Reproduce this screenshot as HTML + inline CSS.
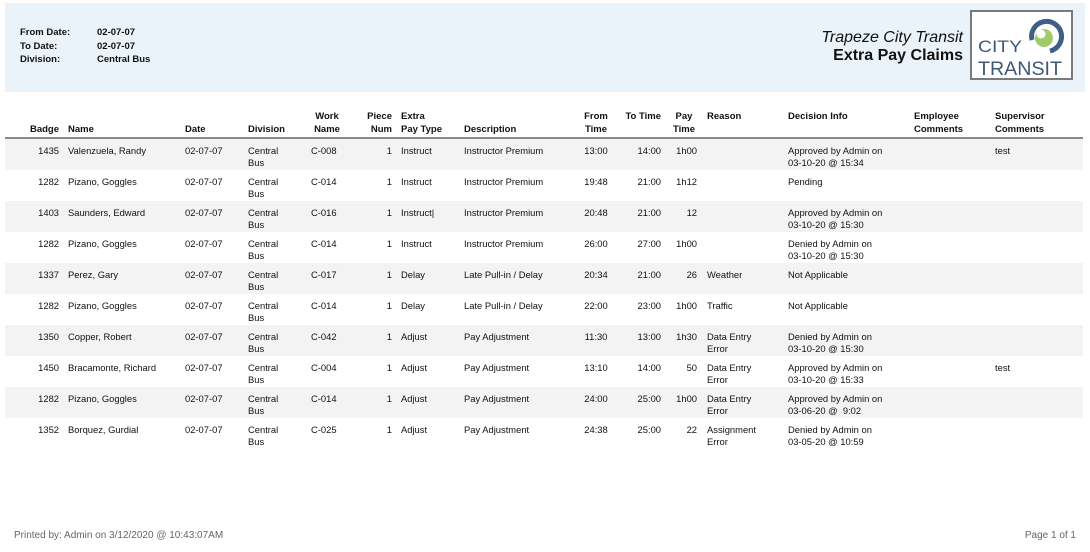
<!DOCTYPE html>
<html><head><meta charset="utf-8"><style>
*{margin:0;padding:0;box-sizing:border-box}
body{width:1090px;height:552px;background:#fff;font-family:"Liberation Sans",Arial,sans-serif;color:#111;position:relative;overflow:hidden}
.hdr{position:absolute;left:5px;top:3px;width:1080px;height:89px;background:#eaf2fa}
.lab{position:absolute;font-size:9.5px;font-weight:bold;line-height:13px}
.t1{position:absolute;right:127px;top:29px;font-size:16px;font-style:italic;line-height:18px}
.t2{position:absolute;right:127px;top:47px;font-size:16px;font-weight:bold;line-height:18px}
.logo{position:absolute;left:970px;top:10px;width:103px;height:70px;border:2px solid #7a7a7a;background:#fff}
.th{position:absolute;top:110px;font-size:9.5px;font-weight:bold;line-height:13px}
.line{position:absolute;left:5px;top:137px;width:1078px;height:2px;background:#8a8a8a}
.row{position:absolute;left:5px;width:1078px;height:31px}
.g{background:#f3f3f3}
.c{position:absolute;top:6px;font-size:9.4px;line-height:12px;white-space:nowrap}
.r{text-align:right}
.ft{position:absolute;top:529px;font-size:10px;color:#666;line-height:13px}
</style></head><body>
<div class="hdr"></div>
<div class="lab" style="left:20px;top:26px">From Date:</div><div class="lab" style="left:97px;top:26px">02-07-07</div>
<div class="lab" style="left:20px;top:40px">To Date:</div><div class="lab" style="left:97px;top:40px">02-07-07</div>
<div class="lab" style="left:20px;top:53px">Division:</div><div class="lab" style="left:97px;top:53px">Central Bus</div>
<div class="t1">Trapeze City Transit</div>
<div class="t2">Extra Pay Claims</div>
<div class="logo">
<svg width="99" height="66" viewBox="0 0 99 66">
<path d="M60 28 A15 15 0 1 1 78 39" fill="none" stroke="#3f5f86" stroke-width="5"/>
<circle cx="72" cy="26" r="9" fill="#9fcb6a"/>
<circle cx="69" cy="22" r="4.5" fill="#fff"/>
<text x="6" y="40" font-family="Liberation Sans,Arial,sans-serif" font-size="17" fill="#3f5876" textLength="44" lengthAdjust="spacingAndGlyphs">CITY</text>
<text x="6" y="63" font-family="Liberation Sans,Arial,sans-serif" font-size="19.5" fill="#3f5876" textLength="84" lengthAdjust="spacingAndGlyphs">TRANSIT</text>
</svg></div>

<div class="th" style="left:20px;width:39px;text-align:right;top:123px">Badge</div>
<div class="th" style="left:68px;top:123px">Name</div>
<div class="th" style="left:185px;top:123px">Date</div>
<div class="th" style="left:248px;top:123px">Division</div>
<div class="th" style="left:305px;width:44px;text-align:center">Work<br>Name</div>
<div class="th" style="left:352px;width:40px;text-align:right">Piece<br>Num</div>
<div class="th" style="left:401px">Extra<br>Pay Type</div>
<div class="th" style="left:464px;top:123px">Description</div>
<div class="th" style="left:578px;width:36px;text-align:center">From<br>Time</div>
<div class="th" style="left:615px;width:46px;text-align:right">To Time</div>
<div class="th" style="left:670px;width:28px;text-align:center">Pay<br>Time</div>
<div class="th" style="left:707px">Reason</div>
<div class="th" style="left:788px">Decision Info</div>
<div class="th" style="left:914px">Employee<br>Comments</div>
<div class="th" style="left:995px">Supervisor<br>Comments</div>
<div class="line"></div>

<div class="row g" style="top:139px"><div class="c r" style="left:15px;width:39px">1435</div><div class="c" style="left:63px">Valenzuela, Randy</div><div class="c" style="left:180px">02-07-07</div><div class="c" style="left:243px">Central<br>Bus</div><div class="c" style="left:306px">C-008</div><div class="c r" style="left:357px;width:30px">1</div><div class="c" style="left:396px">Instruct</div><div class="c" style="left:459px">Instructor Premium</div><div class="c" style="left:575px;width:32px;text-align:center">13:00</div><div class="c r" style="left:615px;width:41px">14:00</div><div class="c r" style="left:660px;width:32px">1h00</div><div class="c" style="left:783px">Approved by Admin on<br>03-10-20 @ 15:34</div><div class="c" style="left:990px">test</div></div>

<div class="row" style="top:170px"><div class="c r" style="left:15px;width:39px">1282</div><div class="c" style="left:63px">Pizano, Goggles</div><div class="c" style="left:180px">02-07-07</div><div class="c" style="left:243px">Central<br>Bus</div><div class="c" style="left:306px">C-014</div><div class="c r" style="left:357px;width:30px">1</div><div class="c" style="left:396px">Instruct</div><div class="c" style="left:459px">Instructor Premium</div><div class="c" style="left:575px;width:32px;text-align:center">19:48</div><div class="c r" style="left:615px;width:41px">21:00</div><div class="c r" style="left:660px;width:32px">1h12</div><div class="c" style="left:783px">Pending</div></div>

<div class="row g" style="top:201px"><div class="c r" style="left:15px;width:39px">1403</div><div class="c" style="left:63px">Saunders, Edward</div><div class="c" style="left:180px">02-07-07</div><div class="c" style="left:243px">Central<br>Bus</div><div class="c" style="left:306px">C-016</div><div class="c r" style="left:357px;width:30px">1</div><div class="c" style="left:396px">Instruct|</div><div class="c" style="left:459px">Instructor Premium</div><div class="c" style="left:575px;width:32px;text-align:center">20:48</div><div class="c r" style="left:615px;width:41px">21:00</div><div class="c r" style="left:660px;width:32px">12</div><div class="c" style="left:783px">Approved by Admin on<br>03-10-20 @ 15:30</div></div>

<div class="row" style="top:232px"><div class="c r" style="left:15px;width:39px">1282</div><div class="c" style="left:63px">Pizano, Goggles</div><div class="c" style="left:180px">02-07-07</div><div class="c" style="left:243px">Central<br>Bus</div><div class="c" style="left:306px">C-014</div><div class="c r" style="left:357px;width:30px">1</div><div class="c" style="left:396px">Instruct</div><div class="c" style="left:459px">Instructor Premium</div><div class="c" style="left:575px;width:32px;text-align:center">26:00</div><div class="c r" style="left:615px;width:41px">27:00</div><div class="c r" style="left:660px;width:32px">1h00</div><div class="c" style="left:783px">Denied by Admin on<br>03-10-20 @ 15:30</div></div>

<div class="row g" style="top:263px"><div class="c r" style="left:15px;width:39px">1337</div><div class="c" style="left:63px">Perez, Gary</div><div class="c" style="left:180px">02-07-07</div><div class="c" style="left:243px">Central<br>Bus</div><div class="c" style="left:306px">C-017</div><div class="c r" style="left:357px;width:30px">1</div><div class="c" style="left:396px">Delay</div><div class="c" style="left:459px">Late Pull-in / Delay</div><div class="c" style="left:575px;width:32px;text-align:center">20:34</div><div class="c r" style="left:615px;width:41px">21:00</div><div class="c r" style="left:660px;width:32px">26</div><div class="c" style="left:702px">Weather</div><div class="c" style="left:783px">Not Applicable</div></div>

<div class="row" style="top:294px"><div class="c r" style="left:15px;width:39px">1282</div><div class="c" style="left:63px">Pizano, Goggles</div><div class="c" style="left:180px">02-07-07</div><div class="c" style="left:243px">Central<br>Bus</div><div class="c" style="left:306px">C-014</div><div class="c r" style="left:357px;width:30px">1</div><div class="c" style="left:396px">Delay</div><div class="c" style="left:459px">Late Pull-in / Delay</div><div class="c" style="left:575px;width:32px;text-align:center">22:00</div><div class="c r" style="left:615px;width:41px">23:00</div><div class="c r" style="left:660px;width:32px">1h00</div><div class="c" style="left:702px">Traffic</div><div class="c" style="left:783px">Not Applicable</div></div>

<div class="row g" style="top:325px"><div class="c r" style="left:15px;width:39px">1350</div><div class="c" style="left:63px">Copper, Robert</div><div class="c" style="left:180px">02-07-07</div><div class="c" style="left:243px">Central<br>Bus</div><div class="c" style="left:306px">C-042</div><div class="c r" style="left:357px;width:30px">1</div><div class="c" style="left:396px">Adjust</div><div class="c" style="left:459px">Pay Adjustment</div><div class="c" style="left:575px;width:32px;text-align:center">11:30</div><div class="c r" style="left:615px;width:41px">13:00</div><div class="c r" style="left:660px;width:32px">1h30</div><div class="c" style="left:702px">Data Entry<br>Error</div><div class="c" style="left:783px">Denied by Admin on<br>03-10-20 @ 15:30</div></div>

<div class="row" style="top:356px"><div class="c r" style="left:15px;width:39px">1450</div><div class="c" style="left:63px">Bracamonte, Richard</div><div class="c" style="left:180px">02-07-07</div><div class="c" style="left:243px">Central<br>Bus</div><div class="c" style="left:306px">C-004</div><div class="c r" style="left:357px;width:30px">1</div><div class="c" style="left:396px">Adjust</div><div class="c" style="left:459px">Pay Adjustment</div><div class="c" style="left:575px;width:32px;text-align:center">13:10</div><div class="c r" style="left:615px;width:41px">14:00</div><div class="c r" style="left:660px;width:32px">50</div><div class="c" style="left:702px">Data Entry<br>Error</div><div class="c" style="left:783px">Approved by Admin on<br>03-10-20 @ 15:33</div><div class="c" style="left:990px">test</div></div>

<div class="row g" style="top:387px"><div class="c r" style="left:15px;width:39px">1282</div><div class="c" style="left:63px">Pizano, Goggles</div><div class="c" style="left:180px">02-07-07</div><div class="c" style="left:243px">Central<br>Bus</div><div class="c" style="left:306px">C-014</div><div class="c r" style="left:357px;width:30px">1</div><div class="c" style="left:396px">Adjust</div><div class="c" style="left:459px">Pay Adjustment</div><div class="c" style="left:575px;width:32px;text-align:center">24:00</div><div class="c r" style="left:615px;width:41px">25:00</div><div class="c r" style="left:660px;width:32px">1h00</div><div class="c" style="left:702px">Data Entry<br>Error</div><div class="c" style="left:783px">Approved by Admin on<br>03-06-20 @&nbsp; 9:02</div></div>

<div class="row" style="top:418px"><div class="c r" style="left:15px;width:39px">1352</div><div class="c" style="left:63px">Borquez, Gurdial</div><div class="c" style="left:180px">02-07-07</div><div class="c" style="left:243px">Central<br>Bus</div><div class="c" style="left:306px">C-025</div><div class="c r" style="left:357px;width:30px">1</div><div class="c" style="left:396px">Adjust</div><div class="c" style="left:459px">Pay Adjustment</div><div class="c" style="left:575px;width:32px;text-align:center">24:38</div><div class="c r" style="left:615px;width:41px">25:00</div><div class="c r" style="left:660px;width:32px">22</div><div class="c" style="left:702px">Assignment<br>Error</div><div class="c" style="left:783px">Denied by Admin on<br>03-05-20 @ 10:59</div></div>

<div class="ft" style="left:14px">Printed by: Admin on 3/12/2020 @ 10:43:07AM</div>
<div class="ft" style="right:14px">Page 1 of 1</div>
</body></html>
